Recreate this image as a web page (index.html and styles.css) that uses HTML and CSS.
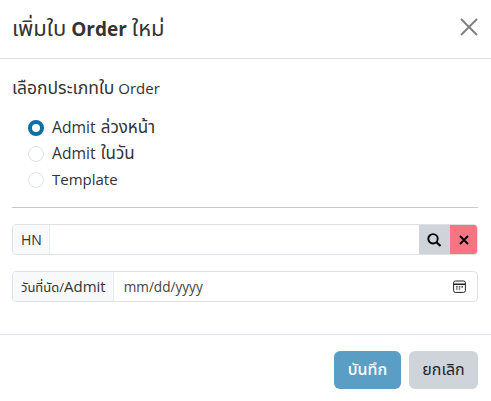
FILE: index.html
```html
<!DOCTYPE html>
<html>
<head>
	<title>เพิ่มใบ Order ใหม่</title>
	<link rel="stylesheet" href="styles.css">
</head>
<body>
	<div class="modal">
		<div class="modal-header">
			<h5 class="modal-title"><span class="th">เพิ่มใบ</span> <b>Order</b> <span class="th">ใหม่</span></h5>
			<svg class="btn-close" width="18" height="18" viewBox="0 0 18 18"><path d="M1 1L17 17M17 1L1 17" stroke="#808080" stroke-width="2" fill="none"/></svg>
		</div>
		<div class="modal-body">
			<p class="type-label"><span class="th">เลือกประเภทใบ</span> Order</p>
			<div class="radio-list">
				<div class="radio-row"><span class="radio checked"></span><span class="radio-text admit">Admit <span class="th">ล่วงหน้า</span></span></div>
				<div class="radio-row"><span class="radio"></span><span class="radio-text admit">Admit <span class="th">ในวัน</span></span></div>
				<div class="radio-row"><span class="radio"></span><span class="radio-text">Template</span></div>
			</div>
			<hr class="divider">
			<div class="input-group hn-group">
				<span class="input-label">HN</span>
				<span class="input-field"></span>
				<button class="icon-btn search-btn">
					<svg width="15" height="14" viewBox="0 0 15 14"><circle cx="6" cy="5.8" r="4.7" stroke="#000" stroke-width="1.9" fill="none"/><path d="M9.5 9.2L13.5 13" stroke="#000" stroke-width="2.2" fill="none"/></svg>
				</button>
				<button class="icon-btn clear-btn">
					<svg width="10" height="10" viewBox="0 0 10 10"><path d="M1 1L9 9M9 1L1 9" stroke="#000" stroke-width="1.9" fill="none"/></svg>
				</button>
			</div>
			<div class="input-group date-group">
				<span class="input-label"><span class="date-label">วันที่นัด/<span class="latin">Admit</span></span></span>
				<span class="input-field date-field">mm/dd/yyyy
					<svg width="13" height="13" viewBox="0 0 13 13"><rect x="0.6" y="1" width="11.8" height="11.4" rx="1.8" stroke="#222" stroke-width="1" fill="none"/><path d="M1 4.2H12" stroke="#222" stroke-width="1.4"/><path d="M3 6.8h1.6M5.7 6.8h1.6M8.4 6.8h1.6M3 9h1.6M5.7 9h1.6" stroke="#222" stroke-width="1.2"/></svg>
				</span>
			</div>
		</div>
		<div class="modal-footer">
			<button class="btn btn-save">บันทึก</button>
			<button class="btn btn-cancel">ยกเลิก</button>
		</div>
	</div>
</body>
</html>
```

FILE: styles.css
```css
* {
	box-sizing: border-box;
}

body {
	margin: 0;
	background: #fff;
	color: #212529;
	font-family: "Open Sans", "Noto Sans", "Noto Sans Thai", "Liberation Sans", sans-serif;
	font-size: 14px;
}

.modal {
	width: 491px;
	height: 401px;
	display: flex;
	flex-direction: column;
}

.modal-header {
	height: 59px;
	padding: 0 13px 0 12px;
	display: flex;
	align-items: center;
	justify-content: space-between;
	border-bottom: 1px solid #dee2e6;
}

.modal-title {
	margin: 0;
	font-size: 19px;
	font-weight: 500;
	color: #333;
}

.modal-title .th {
	font-size: 22px;
	font-weight: 400;
}

.modal-title b {
	font-weight: 700;
}

.btn-close {
	margin-top: -5px;
}

.modal-body {
	height: 276px;
	padding: 18px 13px 0 12px;
	border-bottom: 1px solid #dee2e6;
}

.type-label {
	margin: 0;
	height: 20px;
	line-height: 20px;
	font-size: 15px;
	color: #333;
}

.type-label .th {
	font-size: 17.5px;
}

.radio-list {
	margin-top: 18px;
	padding-left: 16px;
}

.radio-row {
	height: 26px;
	line-height: 26px;
	display: flex;
	align-items: center;
	font-size: 15px;
	color: #333;
}

.radio-text {
	margin-top: -2px;
}

.radio-text.admit {
	font-size: 15.7px;
	word-spacing: 1px;
}

.radio-text .th {
	font-size: 17px;
}

.radio {
	width: 16px;
	height: 16px;
	margin-right: 8px;
	border-radius: 50%;
	border: 1px solid #dee2e6;
	background: #fff;
}

.radio.checked {
	border: 4.5px solid #0d6ea6;
}

.divider {
	margin: 14px 0 16px;
	border: 0;
	border-top: 1px solid #c8c8c8;
}

.input-group {
	height: 31px;
	display: flex;
	border: 1px solid #dee2e6;
	border-radius: 4px;
	overflow: hidden;
}

.date-group {
	margin-top: 16px;
}

.input-label {
	padding: 0 7px 0 8px;
	display: flex;
	align-items: center;
	background: #f8f9fa;
	border-right: 1px solid #e9ecef;
	color: #333;
}

.date-label {
	font-size: 13px;
}

.date-label .latin {
	font-size: 15px;
}

.input-field {
	flex: 1;
}

.date-field {
	padding: 0 11px 0 10px;
	display: flex;
	align-items: center;
	justify-content: space-between;
	font-size: 13.6px;
	color: #444;
}

.icon-btn {
	margin: -1px 0;
	padding: 0;
	border: 0;
	display: flex;
	align-items: center;
	justify-content: center;
}

.search-btn {
	width: 31px;
	background: #ced4da;
}

.clear-btn {
	width: 28px;
	margin-right: -1px;
	background: #f77583;
}

.modal-footer {
	padding: 16px 13px 0;
	display: flex;
	justify-content: flex-end;
	gap: 8px;
}

.btn {
	height: 38px;
	padding: 0 12px;
	border: 0;
	border-radius: 6px;
	font-family: inherit;
	font-size: 16px;
	font-weight: 500;
}

.btn-save {
	width: 67px;
	background: #5b9ec5;
	color: #fff;
}

.btn-cancel {
	width: 69px;
	background: #ced4da;
	color: #212529;
	font-weight: 400;
}
```
